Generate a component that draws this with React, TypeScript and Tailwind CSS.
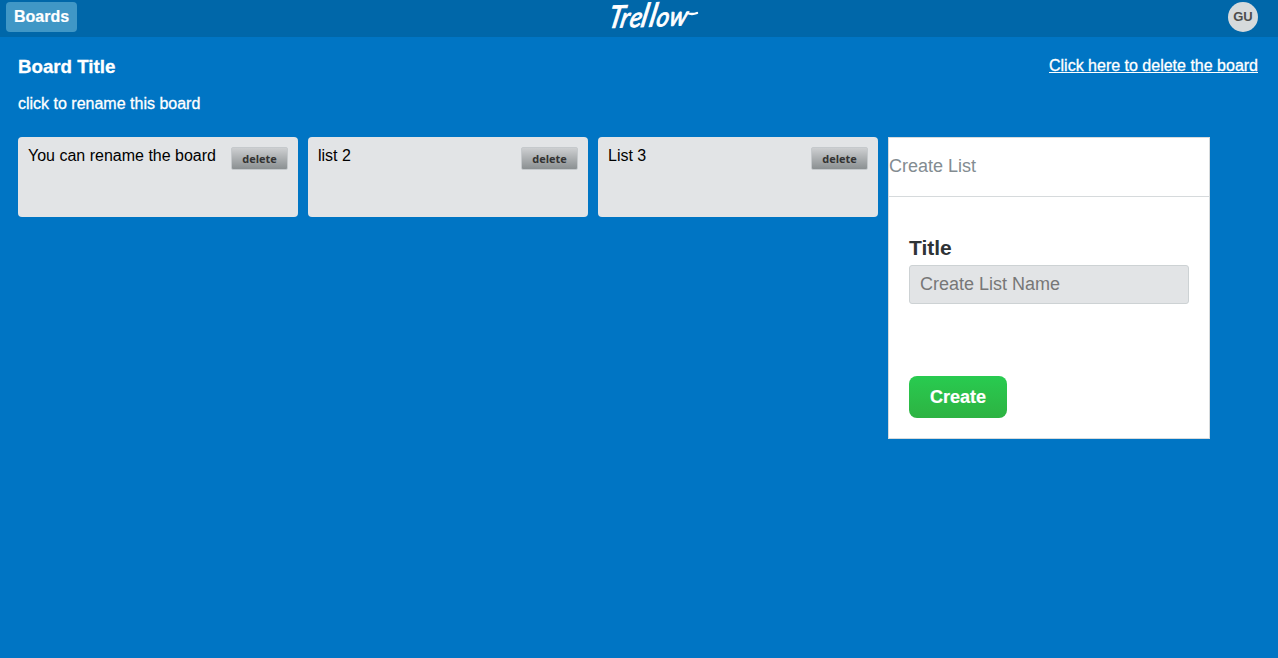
const lists = ["You can rename the board", "list 2", "List 3"];

function Logo() {
  return (
    <svg width="92" height="34" viewBox="0 0 92 34" className="overflow-visible" role="img" aria-label="Trellow">
      <g transform="matrix(0.9 -0.03 -0.2 1 -1 28)" fill="#fff" stroke="#fff" strokeWidth="0.9">
        <text
          x="0 13.5 24 36.5 45.5 53.5 68"
          y="0"
          fontFamily="Lato, sans-serif"
          fontStyle="italic"
          fontWeight="400"
          fontSize="30"
        >
          <tspan fontSize="31">T</tspan>
          <tspan fontSize="28">re</tspan>
          <tspan fontSize="33">ll</tspan>
          <tspan fontSize="27">ow</tspan>
        </text>
      </g>
      <path d="M79 13 Q84 15 89 13" fill="none" stroke="#fff" strokeWidth="2.4" strokeLinecap="round" />
    </svg>
  );
}

function Header() {
  return (
    <header className="grid h-[37px] grid-cols-3 items-start bg-[#0067a9] px-1.5">
      <button className="mt-0.5 h-[30px] w-[71px] rounded bg-[#4097c6] text-base leading-[30px] font-bold [-webkit-text-stroke:0.2px]">
        Boards
      </button>
      <div className="flex justify-center pl-[30px]">
        <Logo />
      </div>
      <div className="mt-0.5 mr-3.5 flex size-[30px] items-center justify-center justify-self-end rounded-full bg-[#d6dadc] text-[13px] font-bold text-[#4d4d4d]">
        GU
      </div>
    </header>
  );
}

function ListCard({ title }: { title: string }) {
  return (
    <article className="flex h-20 w-[280px] items-start justify-between rounded bg-[#e2e4e6] p-2.5 text-base text-black">
      <h2 className="leading-[18px]">{title}</h2>
      <button className="h-[23px] w-[57px] rounded-xs border border-[#c5c9cc] bg-linear-to-b from-[#cdcfd1] to-[#8b9092] pt-px font-['Open_Sans','Noto_Sans',sans-serif] text-[11px] leading-5 font-bold text-[#333]">
        delete
      </button>
    </article>
  );
}

function CreateList() {
  return (
    <form className="h-[302px] w-[322px] border border-[#d6dadc] bg-white">
      <h2 className="h-[59px] border-b border-[#d6dadc] text-lg leading-[57px] text-[#838c91]">Create List</h2>
      <div className="px-5 pt-[39px]">
        <label htmlFor="list-title" className="block text-[21px] leading-6 font-bold text-[#2e3336]">
          Title
        </label>
        <input
          id="list-title"
          placeholder="Create List Name"
          className="mt-[5px] block h-[39px] w-full rounded-[3px] border border-[#cdd2d4] bg-[#e2e4e6] px-2.5 text-lg placeholder:text-[#777]"
        />
        <button
          type="button"
          className="mt-[72px] block h-[42px] w-[98px] rounded-lg bg-linear-to-b from-[#28cb50] to-[#2db342] text-lg font-bold text-white [-webkit-text-stroke:0.2px]"
        >
          Create
        </button>
      </div>
    </form>
  );
}

export default function App() {
  return (
    <div className="min-h-screen bg-[#0075c4] font-['Liberation_Sans',Arial,sans-serif] text-white">
      <Header />
      <main className="pr-5 pl-[18px]">
        <div className="flex items-start justify-between pt-[19px] [-webkit-text-stroke:0.3px]">
          <h1 className="text-[18.72px] leading-[22px] font-bold">Board Title</h1>
          <a href="#" className="text-base leading-5 underline">
            Click here to delete the board
          </a>
        </div>
        <p className="mt-4 text-base leading-5 [-webkit-text-stroke:0.3px]">click to rename this board</p>
        <section className="mt-[23px] flex items-start gap-2.5">
          {lists.map((title) => (
            <ListCard key={title} title={title} />
          ))}
          <CreateList />
        </section>
      </main>
    </div>
  );
}
